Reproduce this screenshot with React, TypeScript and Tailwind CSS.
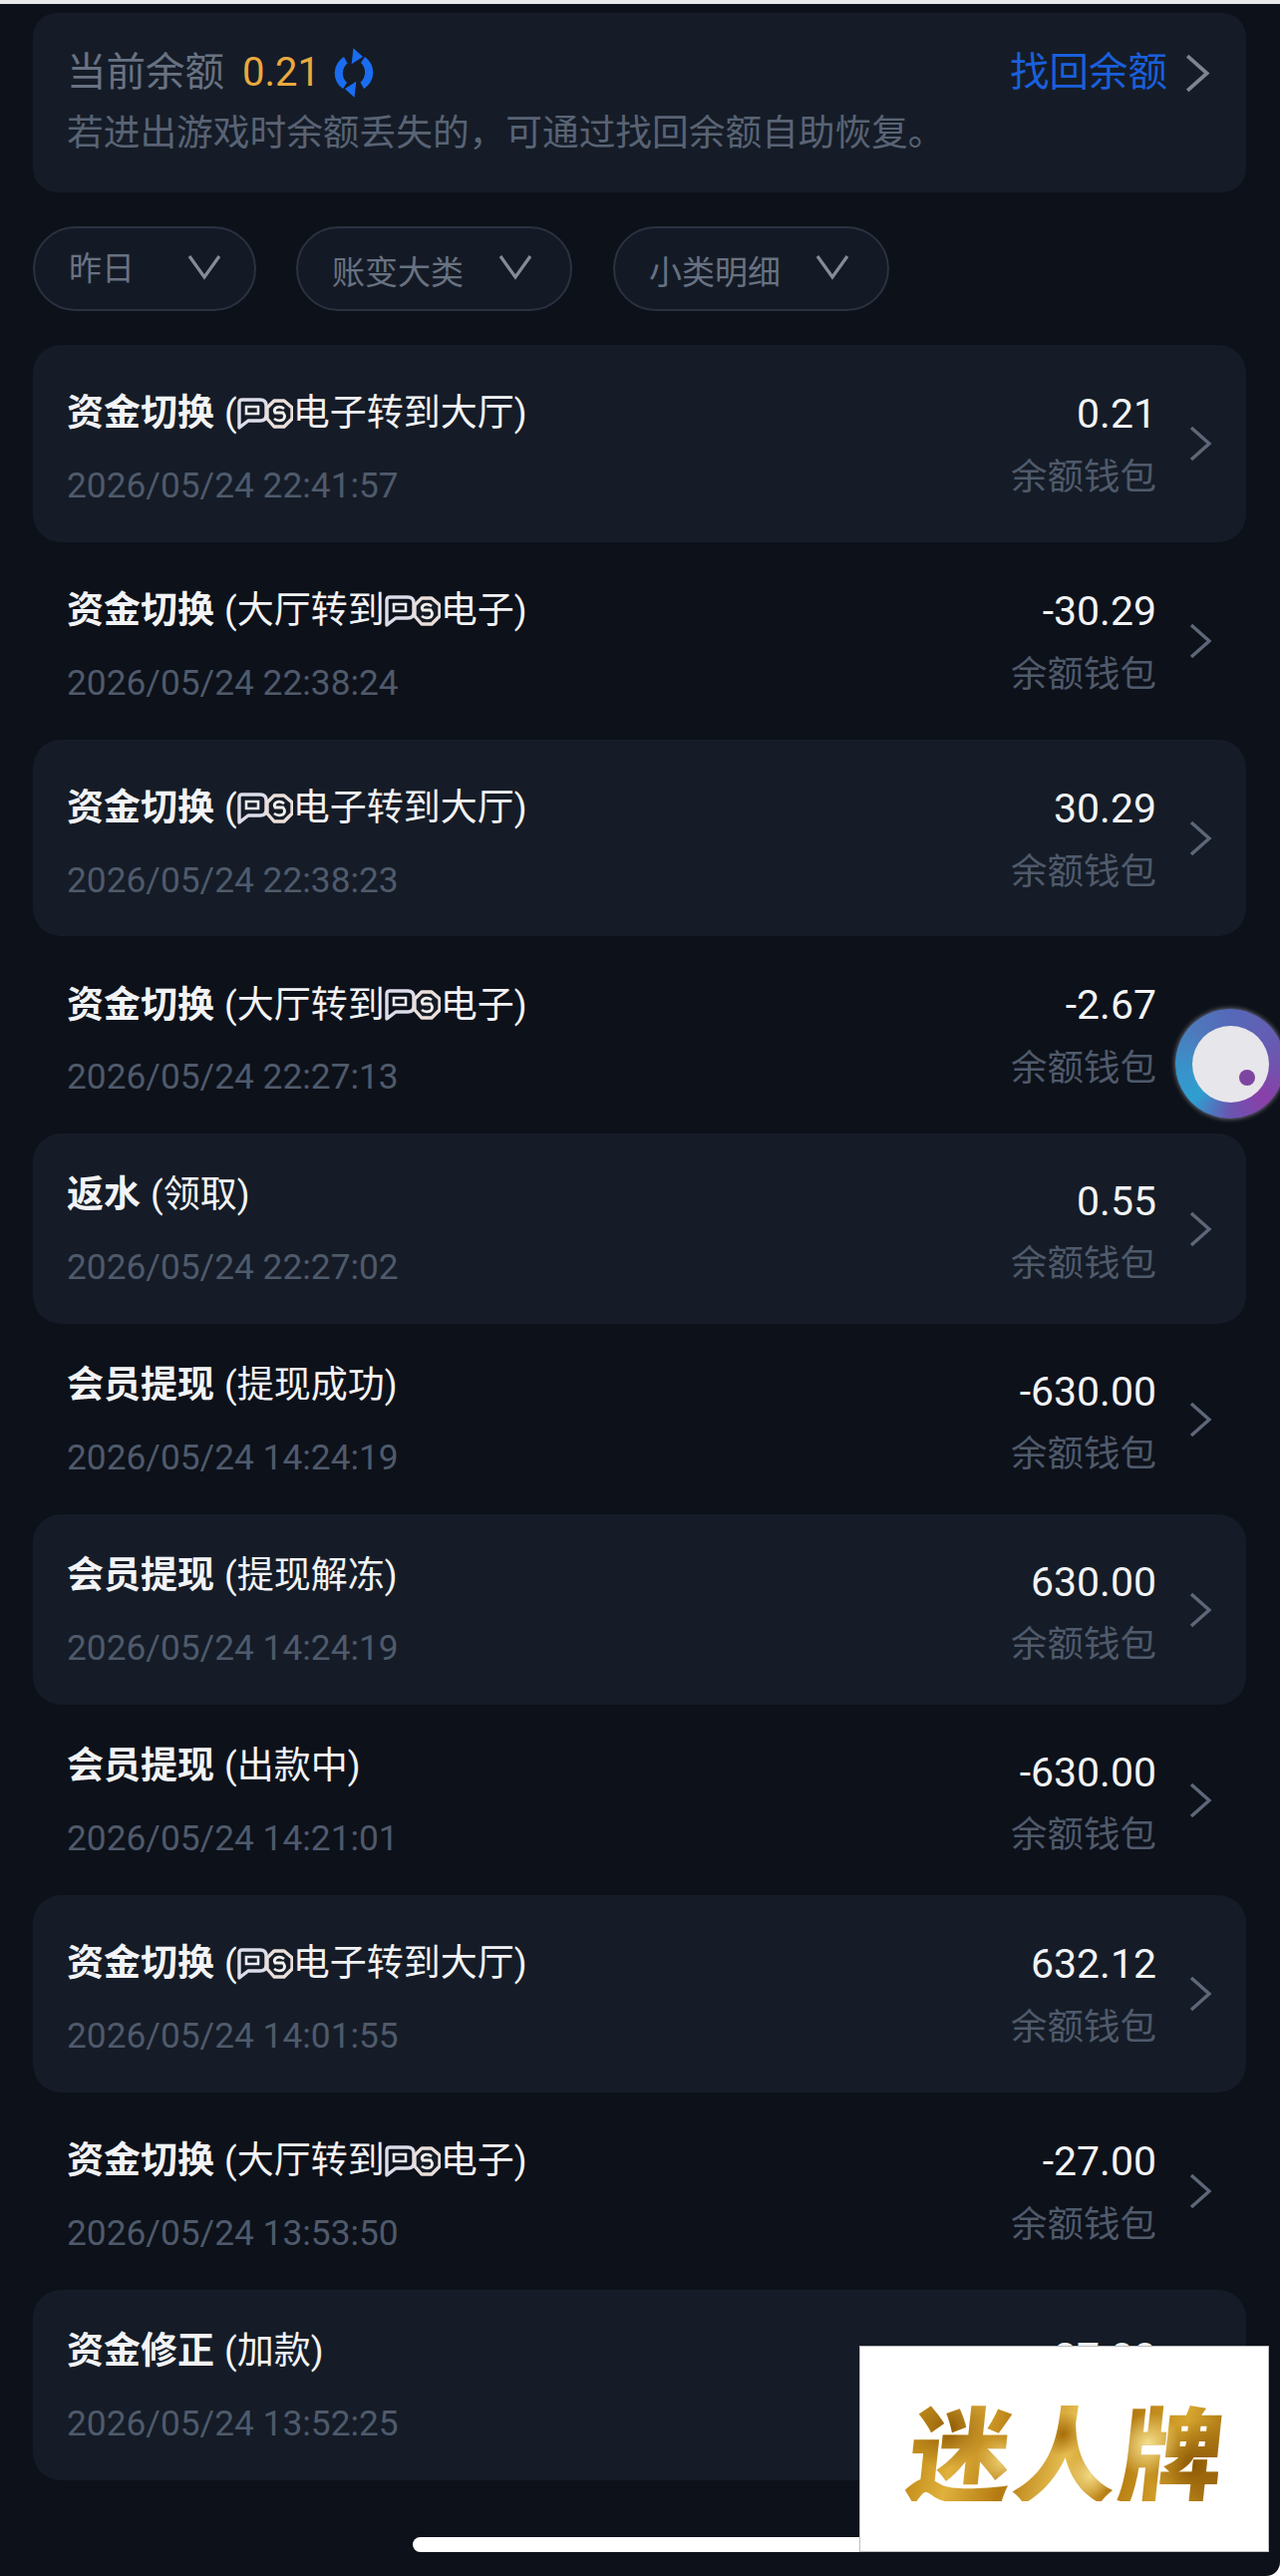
type Row = {
  title: string;
  before?: string;
  after?: string;
  detail?: string;
  time: string;
  amount: string;
};

const rows: Row[] = [
  { title: "资金切换", before: "(", after: "电子转到大厅)", time: "2026/05/24 22:41:57", amount: "0.21" },
  { title: "资金切换", before: "(大厅转到", after: "电子)", time: "2026/05/24 22:38:24", amount: "-30.29" },
  { title: "资金切换", before: "(", after: "电子转到大厅)", time: "2026/05/24 22:38:23", amount: "30.29" },
  { title: "资金切换", before: "(大厅转到", after: "电子)", time: "2026/05/24 22:27:13", amount: "-2.67" },
  { title: "返水", detail: "(领取)", time: "2026/05/24 22:27:02", amount: "0.55" },
  { title: "会员提现", detail: "(提现成功)", time: "2026/05/24 14:24:19", amount: "-630.00" },
  { title: "会员提现", detail: "(提现解冻)", time: "2026/05/24 14:24:19", amount: "630.00" },
  { title: "会员提现", detail: "(出款中)", time: "2026/05/24 14:21:01", amount: "-630.00" },
  { title: "资金切换", before: "(", after: "电子转到大厅)", time: "2026/05/24 14:01:55", amount: "632.12" },
  { title: "资金切换", before: "(大厅转到", after: "电子)", time: "2026/05/24 13:53:50", amount: "-27.00" },
  { title: "资金修正", detail: "(加款)", time: "2026/05/24 13:52:25", amount: "27.00" },
];

function PgLogo() {
  return (
    <svg viewBox="0 0 56 32" className="inline-block w-[56px] h-[32px] shrink-0" fill="none">
      <path d="M2 5 Q2 2 5 2 H23 Q29 2 29 8 V17 Q29 23 23 23 H11 L2 30 Z" stroke="#dcdcea" strokeWidth="3.4" strokeLinejoin="round" />
      <path d="M9 9 H21 V16 H9 Z" stroke="#ecebf2" strokeWidth="2.6" />
      <path d="M37 3 H47 L55 10 V21 L47 29 H37 L30 21 V10 Z" fill="#151c27" stroke="#ecdfda" strokeWidth="3.4" strokeLinejoin="round" />
      <path d="M47 11 Q43 8 39 10 Q36 12 38 15 H46 Q49 19 46 22 Q41 24 37 21" stroke="#f4f0ec" strokeWidth="2.8" />
    </svg>
  );
}

function RefreshIcon() {
  return (
    <svg viewBox="0 0 44 50" className="w-[46px] h-[50px]" fill="#1a6df0">
      <path d="M12 9 A19 19 0 0 0 11 41 L15 35 A13 13 0 0 1 15.5 15.5 Z" />
      <path d="M20 1 L31 8 L21 17 Z" transform="rotate(10 25 9)" />
      <path d="M32 41 A19 19 0 0 0 33 9 L29 15 A13 13 0 0 1 28.5 34.5 Z" />
      <path d="M24 49 L13 42 L23 33 Z" transform="rotate(10 19 41)" />
    </svg>
  );
}

function Chevron({ className }: { className: string }) {
  return (
    <svg viewBox="0 0 23 36" className={className} fill="none" stroke="currentColor" strokeWidth="3.4">
      <path d="M2 2 L20 18 L2 34" />
    </svg>
  );
}

function FilterPill({ label, width, gap, down }: { label: string; width: string; gap: string; down?: boolean }) {
  return (
    <div className={`${width} ${gap} h-[85px] flex items-center pl-[34px] rounded-full border-2 border-[#2a3240] bg-[#141a25] text-[33px] text-[#687282]`}>
      <span className={down ? "mt-[8px]" : ""}>{label}</span>
      <svg viewBox="0 0 34 26" className="w-[34px] h-[26px] text-[#838b99] shrink-0 -mt-[3px]" fill="none" stroke="currentColor" strokeWidth="3.2">
        <path d="M2 2 L17 23 L32 2" />
      </svg>
    </div>
  );
}

function RecordRow({ row, index }: { row: Row; index: number }) {
  const tall = !row.detail;
  return (
    <div
      className={`flex justify-between pl-[34px] pr-[34px] pt-[41px] ${tall ? "h-[197.75px]" : "h-[191px]"} ${
        index % 2 === 0 ? "bg-[#151c27] rounded-[28px]" : ""
      }`}
    >
      <div>
        <div className={`flex items-center text-[37px] text-[#f2f3f5] ${tall ? "h-[56px]" : "h-[42px]"}`}>
          <span className="font-bold">{row.title}</span>
          <span className="ml-[10px] flex items-center">
            {row.detail}
            {row.before}
            {tall && <PgLogo />}
            {row.after}
          </span>
        </div>
        <div className={`text-[35.3px] leading-[40px] text-[#4f5a6b] ${tall ? "mt-[24px]" : "mt-[31px]"}`}>{row.time}</div>
      </div>
      <div className="flex">
        <div className="text-right">
          <div className={`text-[41px] text-[#f2f3f5] h-[56px] leading-[56px] ${tall ? "" : "-mt-[1px]"}`}>{row.amount}</div>
          <div className={`text-[36.5px] leading-[44px] text-[#4f5a6b] ${tall ? "mt-[14px]" : "mt-[13px]"}`}>余额钱包</div>
        </div>
        {/* the floating ball sits on top of this row's arrow */}
        <Chevron
          className={`w-[23px] h-[36px] text-[#5d6777] ml-[33px] ${tall ? "mt-[40px]" : "mt-[37px]"} ${
            index === 3 ? "invisible" : ""
          }`}
        />
      </div>
    </div>
  );
}

export default function App() {
  return (
    <div className="relative w-[1284px] h-[2584px] overflow-hidden bg-white font-['Roboto','Noto_Sans_CJK_SC',sans-serif]">
      <div className="h-[4px] bg-[#e9e9ea]" />
      <div className="h-[2580px] bg-[#0d111a] rounded-br-[14px] px-[33px] pt-[9px]">
        {/* Balance card */}
        <div className="h-[180px] w-[1217px] bg-[#151c27] rounded-[24px] pl-[34px] pr-[36px] pt-[30px]">
          <div className="flex items-center h-[60px]">
            <span className="text-[39.5px] text-[#687282]">当前余额</span>
            <span className="ml-[18px] text-[40px] text-[#eaa93f]">0.21</span>
            <span className="ml-[11px]">
              <RefreshIcon />
            </span>
            <span className="ml-auto text-[39.5px] text-[#1a5fdc]">找回余额</span>
            <Chevron className="w-[25px] h-[43px] text-[#7d8593] ml-[18px]" />
          </div>
          <div className="text-[36.7px] leading-[50px] text-[#596374] mt-[6px]">若进出游戏时余额丢失的，可通过找回余额自助恢复。</div>
        </div>

        {/* Filters */}
        <div className="flex mt-[34px]">
          <FilterPill label="昨日" width="w-[224px]" gap="gap-[53px]" />
          <div className="w-[40px]" />
          <FilterPill label="账变大类" width="w-[277px]" gap="gap-[35px]" down />
          <div className="w-[41px]" />
          <FilterPill label="小类明细" width="w-[277px]" gap="gap-[35px]" down />
        </div>

        {/* Records */}
        <div className="mt-[34px] w-[1217px]">
          {rows.map((row, i) => (
            <RecordRow key={i} row={row} index={i} />
          ))}
        </div>
      </div>

      {/* Floating ball */}
      <div className="absolute left-[1179px] top-[1012px] w-[110px] h-[110px] rounded-full bg-[conic-gradient(#5569b8,#6f55b0_90deg,#8a3fa8_135deg,#6a55b0_180deg,#2f9fd0_225deg,#3a90c8_270deg,#4f78bc_315deg,#5569b8)] shadow-[0_0_5px_rgba(255,255,255,0.5)] flex items-center justify-center blur-[0.6px]">
        <div className="relative w-[77px] h-[77px] rounded-full bg-[#e7e6ea]">
          <div className="absolute left-[47px] top-[44px] w-[16px] h-[16px] rounded-full bg-[#7d45a0]" />
        </div>
      </div>

      {/* Home indicator */}
      <div className="absolute left-[414px] top-[2545px] w-[460px] h-[15px] rounded-full bg-white" />

      {/* Watermark */}
      <div className="absolute left-[862px] top-[2353px] w-[411px] h-[207px] bg-white border border-[#bdbdbd] flex items-center justify-center">
        <span className="block ml-[8px] -skew-x-6 text-[104px] leading-none font-black tracking-[2px] font-['Noto_Sans_CJK_SC',sans-serif] bg-[radial-gradient(circle_at_12%_30%,#8f5a05_0,transparent_14%),radial-gradient(circle_at_30%_60%,#f3d67a_0,transparent_12%),radial-gradient(circle_at_48%_35%,#a66d0a_0,transparent_12%),radial-gradient(circle_at_58%_75%,#f2d985_0,transparent_12%),radial-gradient(circle_at_75%_45%,#f5e08e_0,transparent_13%),radial-gradient(circle_at_90%_65%,#8c5704_0,transparent_15%),linear-gradient(100deg,#b9810f,#e0b13c,#b47a10,#e6bd50,#b47a10,#d6a52f,#9a6408)] bg-clip-text text-transparent">
          迷人牌
        </span>
      </div>
    </div>
  );
}
